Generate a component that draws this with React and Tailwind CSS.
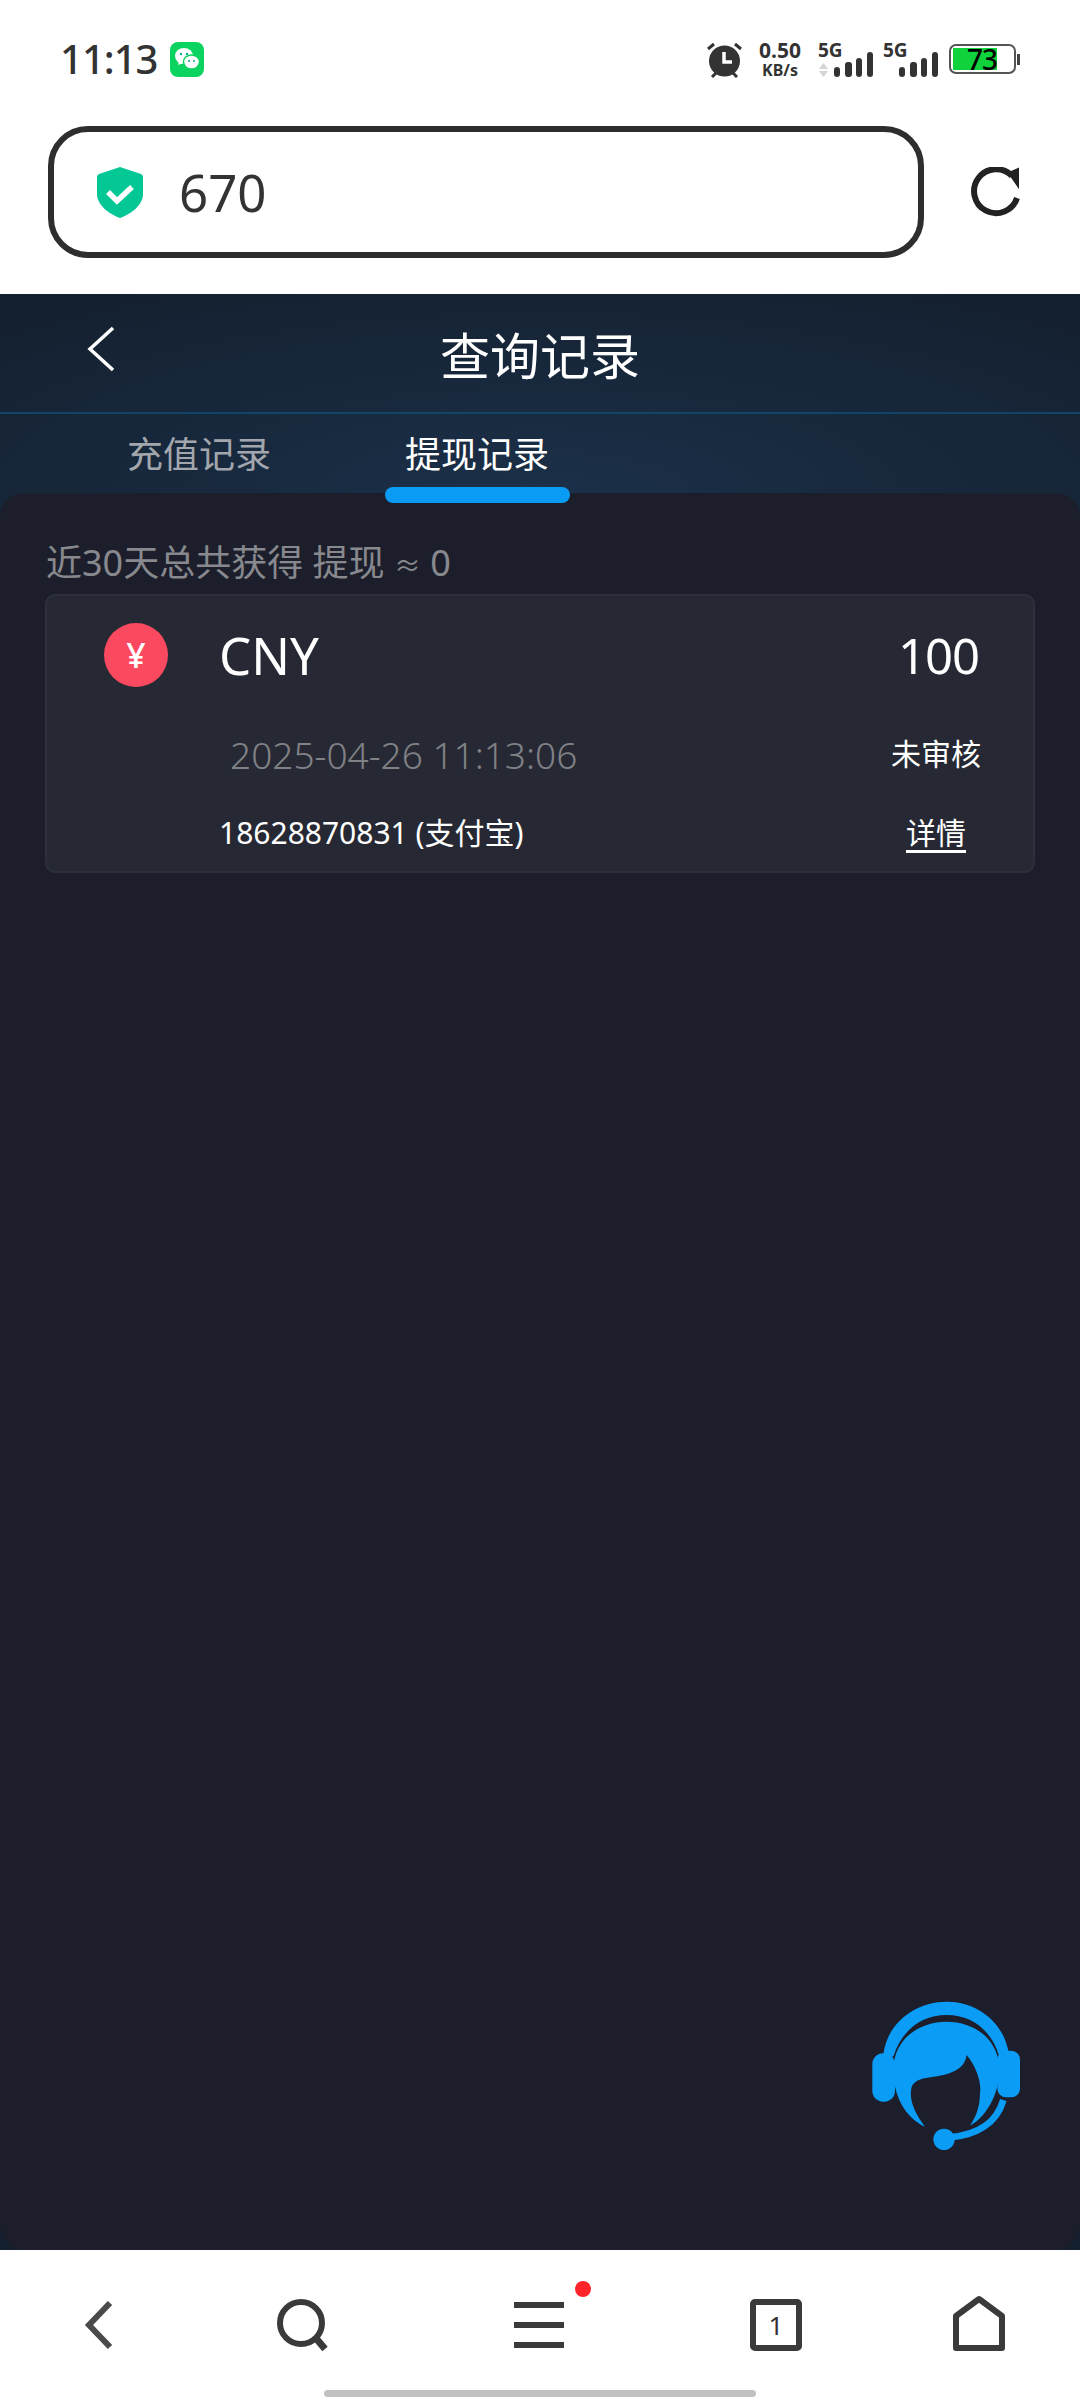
const cjk = { fontFamily: '"Noto Sans", "Noto Sans CJK SC", sans-serif' }

function Bars({ className }) {
  return (
    <svg width="39" height="25" viewBox="0 0 39 25" className={className}>
      <rect x="0" y="15" width="6" height="10" rx="3" fill="#333" />
      <rect x="11" y="10" width="7" height="15" rx="3" fill="#333" />
      <rect x="22" y="6" width="6" height="19" rx="3" fill="#333" />
      <rect x="33" y="0" width="6" height="25" rx="3" fill="#333" />
    </svg>
  )
}

function StatusBar() {
  return (
    <div className="h-[126px] pb-[8px] pl-[60px] pr-[60px] flex items-center justify-between text-[#333]">
      <div className="flex items-center gap-[13px]">
        <span className="text-[40px] font-medium leading-none tracking-[-1px]">11:13</span>
        <div className="w-[34px] h-[35px] rounded-[8px] bg-[#0bd35f] flex items-center justify-center">
          <svg width="26" height="24" viewBox="0 0 26 24">
            <ellipse cx="10" cy="9" rx="9" ry="8" fill="#fff" />
            <path d="M5 14l-1 4 5-2z" fill="#fff" />
            <ellipse cx="17.5" cy="15" rx="8" ry="7" fill="#fff" stroke="#0bd35f" strokeWidth="1.5" />
            <circle cx="7" cy="7" r="1.2" fill="#0a9" />
            <circle cx="13" cy="7" r="1.2" fill="#0a9" />
            <circle cx="15" cy="14" r="1" fill="#0a9" />
            <circle cx="20" cy="14" r="1" fill="#0a9" />
          </svg>
        </div>
      </div>
      <div className="flex items-center mr-[4px]">
        <svg width="37" height="37" viewBox="0 0 37 37" className="mr-[14px]">
          <circle cx="18.5" cy="20" r="15.5" fill="#333" />
          <path d="M2 8l6-5M35 8l-6-5M6 36l4-4M31 36l-4-4" stroke="#333" strokeWidth="3" />
          <path d="M18 11v10h8" stroke="#fff" strokeWidth="3.5" fill="none" />
        </svg>
        <div className="w-[46px] mr-[15px] flex flex-col items-center font-bold">
          <span className="text-[21px] leading-[22px]">0.50</span>
          <span className="text-[16px] leading-[18px]">KB/s</span>
        </div>
        <div className="relative w-[54px] h-[36px] mr-[11px]">
          <span className="absolute left-0 top-[-2px] text-[19px] leading-[22px] font-bold">5G</span>
          <svg width="11" height="14" viewBox="0 0 11 14" className="absolute left-0 bottom-0">
            <path d="M5.5 0L10 6H1zM5.5 14L10 8H1z" fill="#d4d4d4" />
          </svg>
          <Bars className="absolute right-[-1px] bottom-0" />
        </div>
        <div className="relative w-[55px] h-[36px] mr-[11px]">
          <span className="absolute left-0 top-[-2px] text-[19px] leading-[22px] font-bold">5G</span>
          <Bars className="absolute right-0 bottom-0" />
        </div>
        <div className="relative w-[67px] h-[30px] rounded-[7px] border-2 border-[#555]">
          <div className="absolute left-[2px] top-[2px] bottom-[2px] w-[44px] bg-[#0fd23c]" />
          <span className="absolute left-[16px] top-[-2px] text-[28px] leading-[30px] text-black font-medium tracking-[-1px]">73</span>
          <div className="absolute right-[-6px] top-[8px] w-[3px] h-[11px] bg-[#444]" />
        </div>
      </div>
    </div>
  )
}

function UrlBar() {
  return (
    <div className="h-[168px] pl-[48px] pr-[60px] flex items-start justify-between">
      <div className="w-[876px] h-[132px] rounded-[40px] border-[6px] border-[#2e2e2e] flex items-center pl-[43px]">
        <svg width="46" height="51" viewBox="0 0 46 51">
          <path d="M23 0L44 7Q46 8 46 10V27C46 38 34 47 23 51C12 47 0 38 0 27V10Q0 8 2 7Z" fill="#03c795" />
          <path d="M11 25l9 9 15-14" stroke="#fff" strokeWidth="5.5" fill="none" />
        </svg>
        <span className="ml-[36px] text-[51px] leading-none text-[#333]">670</span>
      </div>
      <svg width="50" height="50" viewBox="0 0 50 50" className="mt-[41px]">
        <path d="M47 31A22 22 0 1 1 42 9" stroke="#222" strokeWidth="6" fill="none" />
        <path d="M48 2V19L39 6Z" fill="#222" stroke="#222" strokeWidth="2" />
      </svg>
    </div>
  )
}

function Card() {
  return (
    <div className="h-[279px] rounded-[10px] bg-[#262933] border-2 border-[#2d303b] text-white relative">
      <div className="h-[118px] pl-[57px] pr-[54px] flex items-center justify-between">
        <div className="flex items-center">
          <div className="w-[64px] h-[64px] rounded-full bg-[#fb4a60] flex items-center justify-center text-[34px] font-medium leading-none">¥</div>
          <span className="ml-[51px] text-[51px] leading-none">CNY</span>
        </div>
        <span className="text-[49px] leading-none tracking-[-1px]">100</span>
      </div>
      <div className="h-[80px] pl-[183px] pr-[52px] flex items-center justify-between">
        <span className="text-[37px] leading-none text-[#808186] font-light">2025-04-26 11:13:06</span>
        <span className="text-[30px] leading-none">未审核</span>
      </div>
      <div className="h-[77px] pl-[172px] pr-[67px] flex items-center justify-between">
        <span className="text-[30px] leading-none">18628870831 (支付宝)</span>
        <span className="text-[30px] leading-none underline underline-offset-[6px]">详情</span>
      </div>
    </div>
  )
}

function Headset() {
  return (
    <svg width="210" height="180" viewBox="0 0 630 540" fill="#0b9cf6" className="absolute right-[30px] bottom-[240px]">
      <path d="M255 440C190 410 160 340 160 270C160 180 235 125 320 125C405 125 478 180 478 270C478 340 440 410 390 437C410 410 420 375 420 340C425 310 410 260 380 225C375 260 350 275 310 285C270 295 230 290 215 320C205 360 225 400 255 440Z" />
      <path d="M130 225C140 130 225 65 320 65C415 65 495 130 507 225L478 230C455 150 395 105 320 105C245 105 185 150 160 230Z" />
      <rect x="97" y="220" width="68" height="145" rx="32" />
      <rect x="472" y="212" width="68" height="140" rx="26" />
      <path d="M490 360C470 430 410 465 330 472" stroke="#0b9cf6" strokeWidth="20" fill="none" />
      <circle cx="312" cy="478" r="32" />
    </svg>
  )
}

function BottomNav() {
  return (
    <div className="h-[150px] bg-white relative">
      <div className="h-[150px] grid grid-cols-[198px_210px_262px_212px_198px] items-center text-[#3a3a3a]">
        <div className="flex justify-center">
          <svg width="30" height="50" viewBox="0 0 30 50"><path d="M26 3L5 25L26 47" stroke="#4a4a4a" strokeWidth="6" fill="none" /></svg>
        </div>
        <div className="flex justify-center">
          <svg width="52" height="52" viewBox="0 0 52 52"><circle cx="24" cy="24" r="21" stroke="#3a3a3a" strokeWidth="6" fill="none" /><path d="M38 38L48 50" stroke="#3a3a3a" strokeWidth="7" /></svg>
        </div>
        <div className="flex justify-center">
          <div className="relative w-[50px] flex flex-col gap-[14px]">
            <div className="h-[6px] bg-[#3a3a3a]" />
            <div className="h-[6px] bg-[#3a3a3a]" />
            <div className="h-[6px] bg-[#3a3a3a]" />
            <div className="absolute right-[-27px] top-[-21px] w-[16px] h-[16px] rounded-full bg-[#ff2429]" />
          </div>
        </div>
        <div className="flex justify-center">
          <div className="w-[52px] h-[52px] rounded-[5px] border-[6px] border-[#3a3a3a] flex items-center justify-center text-[26px] leading-none text-[#333]">1</div>
        </div>
        <div className="flex justify-center pb-[4px] pr-[4px]">
          <svg width="52" height="56" viewBox="0 0 52 56"><path d="M26 4L49 21V53H3V21Z" stroke="#3a3a3a" strokeWidth="6" fill="none" strokeLinejoin="round" /></svg>
        </div>
      </div>
      <div className="absolute left-[324px] bottom-[3px] w-[432px] h-[7px] rounded-full bg-[#c0c0c0]" />
    </div>
  )
}

export default function App() {
  return (
    <div className="w-[1080px] h-[2400px] bg-white flex flex-col overflow-hidden relative" style={cjk}>
      <StatusBar />
      <UrlBar />

      <div className="flex-1 flex flex-col bg-[radial-gradient(ellipse_800px_240px_at_50%_200px,#1b3049,#14202f_100%)]">
        {/* Header */}
        <div className="h-[120px] border-b-2 border-[#124468] flex items-center relative shrink-0">
          <svg width="30" height="46" viewBox="0 0 30 46" className="absolute left-[86px] top-[32px]">
            <path d="M27 2L4 23L27 44" stroke="#fff" strokeWidth="3.5" fill="none" />
          </svg>
          <h1 className="w-full text-center text-[50px] leading-none text-white pt-[6px]">查询记录</h1>
        </div>

        {/* Tabs */}
        <div className="h-[79px] flex shrink-0 relative z-10">
          <div className="w-[128px]" />
          <div className="w-[142px] flex items-center justify-center text-[36px] leading-none text-[#a3a7ad] whitespace-nowrap pt-[2px]">充值记录</div>
          <div className="w-[136px]" />
          <div className="relative w-[142px] flex items-center justify-center text-[36px] leading-none text-white whitespace-nowrap pt-[2px]">
            提现记录
            <div className="absolute left-[-21px] right-[-22px] top-[73px] h-[16px] rounded-[8px] bg-[#0a9bf4]" />
          </div>
        </div>

        {/* Content */}
        <div className="flex-1 rounded-[24px] bg-[#1c1f2b] px-[45px] pt-[52px]">
          <div className="h-[36px] text-[36px] leading-[36px] text-[#88898e] pl-[1px] mb-[13px]">
            近30天总共获得 提现 <span className="text-[27px]">≈</span> 0
          </div>
          <Card />
        </div>
      </div>

      <BottomNav />
      <Headset />
    </div>
  )
}
